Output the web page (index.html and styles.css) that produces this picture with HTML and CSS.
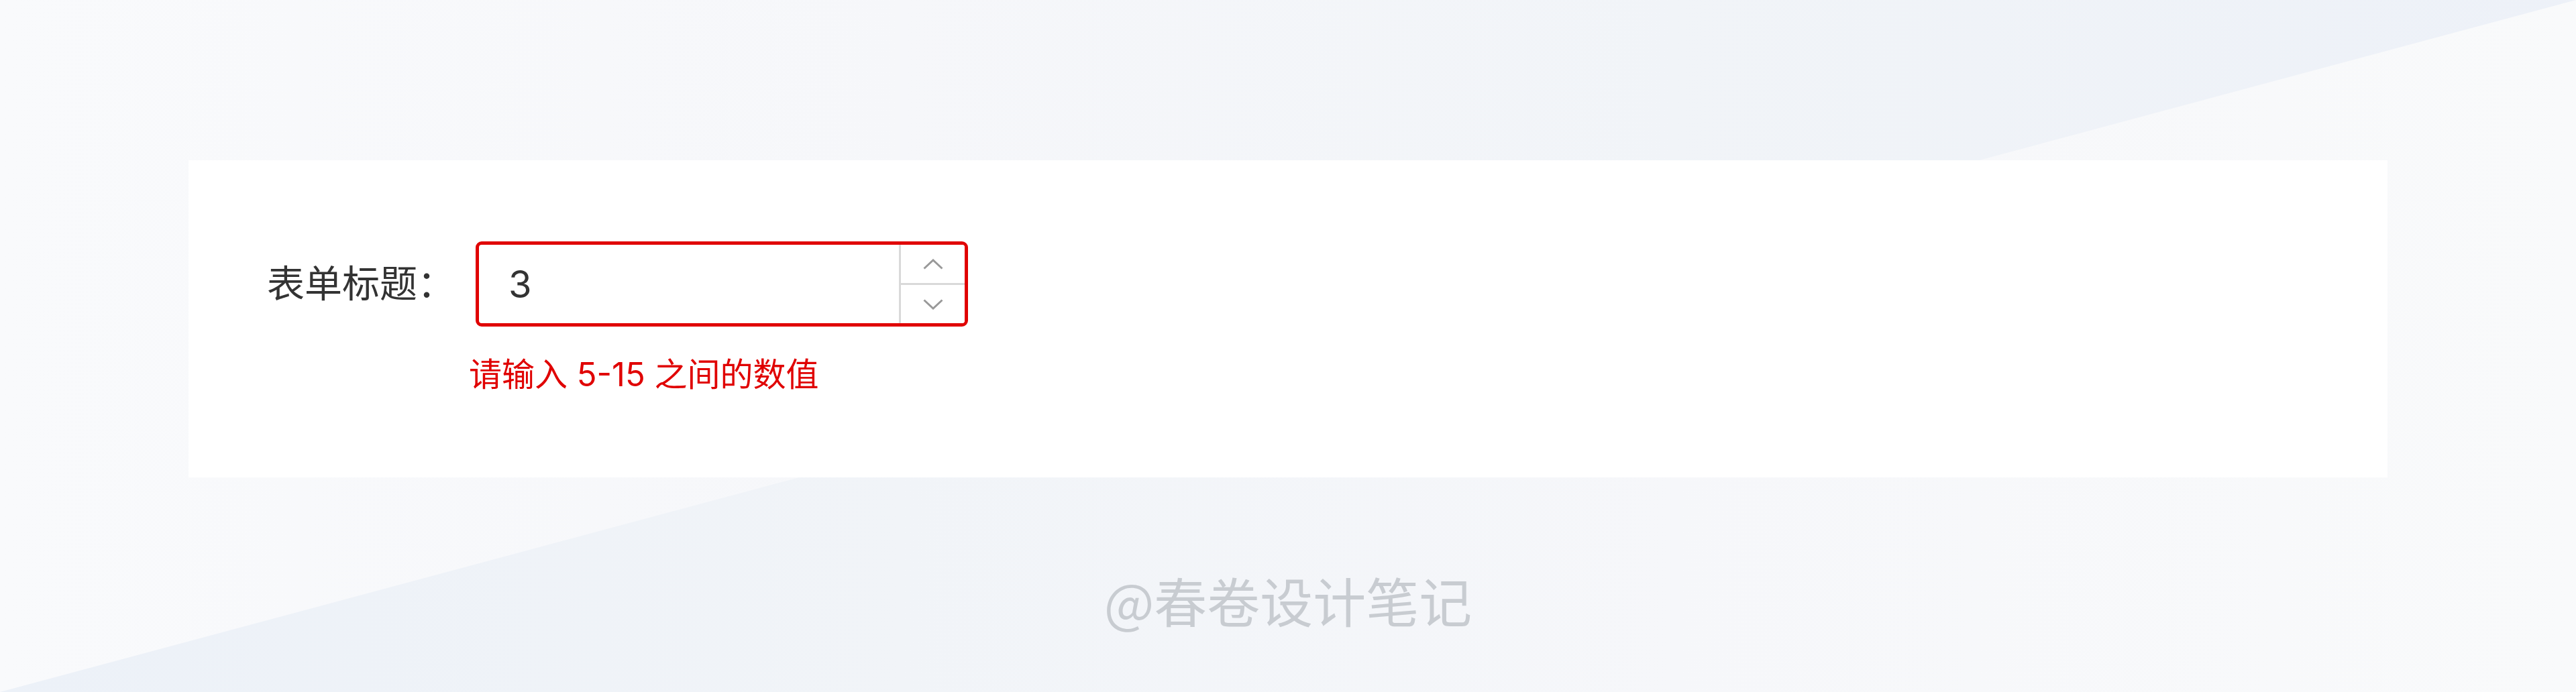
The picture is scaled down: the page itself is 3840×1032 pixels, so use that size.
FILE: index.html
```html
<!DOCTYPE html>
<html lang="zh-CN">
<head>
  <meta charset="UTF-8">
  <meta name="viewport" content="width=device-width, initial-scale=1.0">
  <title>数字输入框 - 校验</title>
  <link rel="stylesheet" href="styles.css">
</head>
<body>
  <main class="page">
    <!-- Form Card -->
    <section class="form-card">
      <div class="form-item">
        <label class="form-label" for="title-count">表单标题：</label>
        <div class="form-control">
          <div class="number-input is-error">
            <input type="text" id="title-count" class="number-value" value="3">
            <div class="number-steps">
              <button class="step-btn" aria-label="增加">
                <svg width="30" height="16" viewBox="0 0 30 16"><polyline points="1.5,14.5 15,2 28.5,14.5" /></svg>
              </button>
              <button class="step-btn" aria-label="减少">
                <svg width="30" height="16" viewBox="0 0 30 16"><polyline points="1.5,1.5 15,14 28.5,1.5" /></svg>
              </button>
            </div>
          </div>
          <div class="form-error">请输入 5-15 之间的数值</div>
        </div>
      </div>
    </section>

    <!-- Watermark -->
    <div class="watermark">@春卷设计笔记</div>
  </main>
</body>
</html>
```

FILE: styles.css
```css
/* General Styles */
html, body {
  height: 100%;
}

body {
  margin: 0;
  padding: 0;
  overflow: hidden;
  position: relative;
  font-family: "Inter", "Noto Sans CJK SC", sans-serif;
  color: #333;
  background: linear-gradient(90deg, #f9fafc 0%, #f6f7fa 35%, #f1f4f8 65%, #edf1f8 100%);
}

/* lower half of the diagonal split */
body::before {
  content: "";
  position: absolute;
  inset: 0;
  background: linear-gradient(90deg, #ecf1f8 0%, #f1f4f8 35%, #f6f7fa 65%, #f9fafb 100%);
  clip-path: polygon(0 100%, 100% 0, 100% 100%);
}

.page {
  position: relative;
  display: flex;
  flex-direction: column;
  align-items: stretch;
  padding: 239px 281px 0;
}

/* Form Card */
.form-card {
  background-color: #ffffff;
  padding: 121px 117px 118px;
}

.form-item {
  display: flex;
  align-items: flex-start;
}

.form-label {
  width: 311px;
  flex-shrink: 0;
  font-size: 56px;
  line-height: 127px;
  color: #333;
}

.form-control {
  display: flex;
  flex-direction: column;
}

/* Number Input */
.number-input {
  display: flex;
  width: 734px;
  height: 127px;
  box-sizing: border-box;
  border: 5px solid #d9d9d9;
  border-radius: 9px;
  background: #fff;
  overflow: hidden;
}

.number-input.is-error {
  border-color: #e00000;
}

.number-value {
  flex: 1;
  min-width: 0;
  border: none;
  outline: none;
  padding: 0 0 0 44px;
  font-family: inherit;
  font-size: 56px;
  color: #333;
  background: transparent;
}

.number-steps {
  width: 95px;
  display: flex;
  flex-direction: column;
  border-left: 3px solid #d9d9d9;
}

.step-btn {
  flex: 1;
  display: flex;
  justify-content: center;
  align-items: center;
  padding: 0;
  border: none;
  background: #fff;
  cursor: pointer;
}

.step-btn + .step-btn {
  border-top: 3px solid #d9d9d9;
}

.step-btn svg polyline {
  fill: none;
  stroke: #999;
  stroke-width: 3;
}

.form-error {
  margin: 37px 0 0 -10px;
  font-size: 49px;
  line-height: 70px;
  color: #e00000;
}

/* Watermark */
.watermark {
  margin-top: 144px;
  text-align: center;
  font-family: "Noto Sans CJK SC", sans-serif;
  font-size: 79px;
  line-height: 78px;
  color: #c8ccd1;
}
```
